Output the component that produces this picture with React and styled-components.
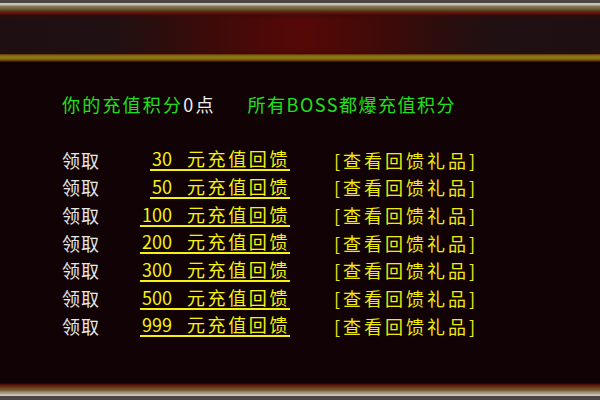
import React from 'react';
import styled, { createGlobalStyle } from 'styled-components';

const GlobalStyle = createGlobalStyle`
  html, body {
    margin: 0;
    padding: 0;
    background: #110305;
  }
  body {
    font-family: "Noto Sans CJK SC", "Noto Sans", sans-serif;
  }
`;

const Frame = styled.div`
  width: 600px;
  height: 400px;
  display: flex;
  flex-direction: column;
  background: #110305;
  overflow: hidden;
`;

const TopBorder = styled.div`
  height: 15px;
  flex-shrink: 0;
  background: linear-gradient(
    180deg,
    #4b4545 0px,
    #4b4545 3px,
    #d2cac2 3px,
    #c4baa8 5px,
    #8c7c5c 6px,
    #6e5c34 9px,
    #4e3a1a 11px,
    #6a1a0a 12px,
    #5a0e08 14px,
    #2a0c0c 15px
  );
`;

const HeaderBand = styled.div`
  height: 39px;
  flex-shrink: 0;
  background:
    linear-gradient(180deg, rgba(60, 8, 6, 0.5) 0px, rgba(0, 0, 0, 0) 4px, rgba(0, 0, 0, 0) 35px, rgba(60, 8, 6, 0.4) 39px),
    linear-gradient(
      90deg,
      #1e1012 0%,
      #1f1012 18%,
      #2e0d0c 28%,
      #420a08 38%,
      #560806 50%,
      #420a08 62%,
      #2e0d0c 72%,
      #1f1012 82%,
      #1e1012 100%
    );
`;

const GoldLine = styled.div`
  height: 8px;
  flex-shrink: 0;
  background: linear-gradient(
    180deg,
    #5a1a08 0px,
    #7a6010 1px,
    #8c7a12 3px,
    #86700f 5px,
    #5a2a08 7px,
    #2a0806 8px
  );
`;

const Content = styled.div`
  flex: 1;
  padding: 30px 0 0 62px;
  display: flex;
  flex-direction: column;
`;

const InfoLine = styled.div`
  height: 24px;
  line-height: 24px;
  font-size: 18px;
  letter-spacing: 2.2px;
  white-space: nowrap;
  display: flex;
  margin-bottom: 30px;
`;

const Text = styled.span`
  color: ${(p) => p.$color};
`;

const Notice = styled.span`
  color: #1ee01e;
  margin-left: 32px;
  letter-spacing: 1.5px;
`;

const Rows = styled.div`
  display: flex;
  flex-direction: column;
`;

const Row = styled.div`
  height: 27.67px;
  display: grid;
  grid-template-columns: 80px 148px auto;
  align-items: center;
  font-size: 18px;
  white-space: nowrap;
`;

const Claim = styled.span`
  color: #e6e6e6;
  letter-spacing: 1px;
`;

const Amount = styled.a`
  justify-self: end;
  display: inline-block;
  line-height: 21px;
  padding-left: 2px;
  color: #f6f20e;
  letter-spacing: 2.6px;
  border-bottom: 2px solid #f6f20e;
  margin-right: 0;
  cursor: pointer;
`;

const Num = styled.span`
  letter-spacing: 0;
  margin-right: 15px;
`;

const GiftLink = styled.span`
  color: #f0ea10;
  padding-left: 44px;
  letter-spacing: 3px;
  cursor: pointer;
`;

const BottomBorder = styled.div`
  height: 17px;
  flex-shrink: 0;
  background: linear-gradient(
    180deg,
    #110305 0px,
    #3a0c06 1px,
    #6a2008 3px,
    #6a4420 5px,
    #6e5834 7px,
    #9a8a6a 9px,
    #b4a88c 11px,
    #d2cac2 12px,
    #c8c0b8 13px,
    #4b4545 13px,
    #4b4545 17px
  );
`;

const amounts = [30, 50, 100, 200, 300, 500, 999];

export default function App() {
  return (
    <Frame>
      <GlobalStyle />
      <TopBorder />
      <HeaderBand />
      <GoldLine />
      <Content>
        <InfoLine>
          <Text $color="#1ee01e">你的充值积分</Text>
          <Text $color="#f0f0f0">0点</Text>
          <Notice>所有BOSS都爆充值积分</Notice>
        </InfoLine>
        <Rows>
          {amounts.map((n) => (
            <Row key={n}>
              <Claim>领取</Claim>
              <Amount>
                <Num>{n}</Num>元充值回馈
              </Amount>
              <GiftLink>[查看回馈礼品]</GiftLink>
            </Row>
          ))}
        </Rows>
      </Content>
      <BottomBorder />
    </Frame>
  );
}
